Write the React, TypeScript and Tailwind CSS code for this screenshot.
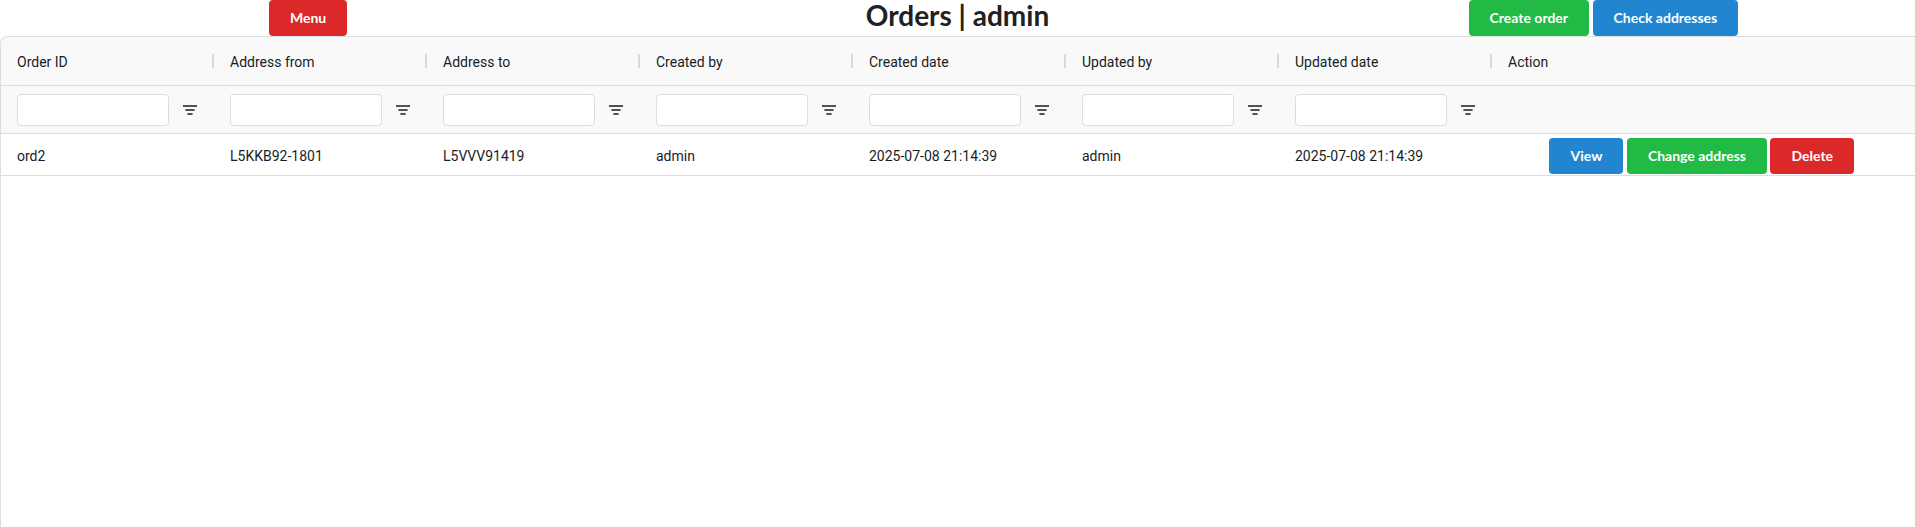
import React from "react";

const columns = [
  "Order ID",
  "Address from",
  "Address to",
  "Created by",
  "Created date",
  "Updated by",
  "Updated date",
];

const row = [
  "ord2",
  "L5KKB92-1801",
  "L5VVV91419",
  "admin",
  "2025-07-08 21:14:39",
  "admin",
  "2025-07-08 21:14:39",
];

function FilterIcon() {
  return (
    <svg width="16" height="16" viewBox="0 0 16 16" className="shrink-0">
      <path d="M1 4h14M3.4 8h9.2M5.4 12h5.2" stroke="#181d1f" strokeWidth="1.6" fill="none" />
    </svg>
  );
}

function SButton({ color, children }: { color: "red" | "green" | "blue"; children: React.ReactNode }) {
  const bg =
    color === "red" ? "bg-[#db2828]" : color === "green" ? "bg-[#21ba45]" : "bg-[#2185d0]";
  return (
    <button
      className={`${bg} text-white font-bold text-[14px] leading-[14px] px-[21px] py-[11px] rounded-[4px] mr-[3.5px] font-['Lato',_'Liberation_Sans',_sans-serif]`}
    >
      {children}
    </button>
  );
}

export default function App() {
  return (
    <div className="w-full h-[527px] overflow-hidden bg-white font-['Roboto',_'Liberation_Sans',_sans-serif] text-[#181d1f]">
      <div className="grid grid-cols-3 mx-[-14px] h-[36px]">
        <div className="px-[14px] flex justify-center items-start">
          <SButton color="red">Menu</SButton>
        </div>
        <div className="px-[14px] flex justify-center items-start">
          <h1 className="font-['Lato',_'Liberation_Sans',_sans-serif] font-bold text-[28px] leading-[30px] text-[#212121]">
            Orders | admin
          </h1>
        </div>
        <div className="px-[14px] flex justify-center items-start">
          <div className="flex">
            <SButton color="green">Create order</SButton>
            <SButton color="blue">Check addresses</SButton>
          </div>
        </div>
      </div>

      <div className="h-[600px] border-l border-t border-[#dcdddd] rounded-tl-[8px] flex flex-col text-[14px]">
        <div className="h-[49px] shrink-0 flex bg-[#f9f9f9] border-b border-[#dcdddd] rounded-tl-[8px]">
          {columns.map((c) => (
            <div key={c} className="w-[213px] shrink-0 flex items-center pl-4">
              <span className="flex-1 pt-[3px]">{c}</span>
              <span className="w-[2px] h-[14px] bg-[#d9d9d9]" />
            </div>
          ))}
          <div className="flex-1 flex items-center pl-4 pt-[3px]">Action</div>
        </div>

        <div className="h-[48px] shrink-0 flex bg-[#f9f9f9] border-b border-[#dcdddd]">
          {columns.map((c) => (
            <div key={c} className="w-[213px] shrink-0 flex items-center px-4 gap-[13px]">
              <div className="flex-1 h-[32px] bg-white border border-[#dcdddd] rounded-[4px]" />
              <FilterIcon />
            </div>
          ))}
          <div className="flex-1" />
        </div>

        <div className="h-[42px] shrink-0 flex bg-white border-b border-[#dcdddd]">
          {row.map((v, i) => (
            <div key={i} className="w-[213px] shrink-0 flex items-center px-4 pt-[4px]">
              {v}
            </div>
          ))}
          <div className="flex-1 flex justify-center items-start pt-[4px] px-4">
            <SButton color="blue">View</SButton>
            <SButton color="green">Change address</SButton>
            <SButton color="red">Delete</SButton>
          </div>
        </div>

        <div className="flex-1 bg-white" />
      </div>
    </div>
  );
}
